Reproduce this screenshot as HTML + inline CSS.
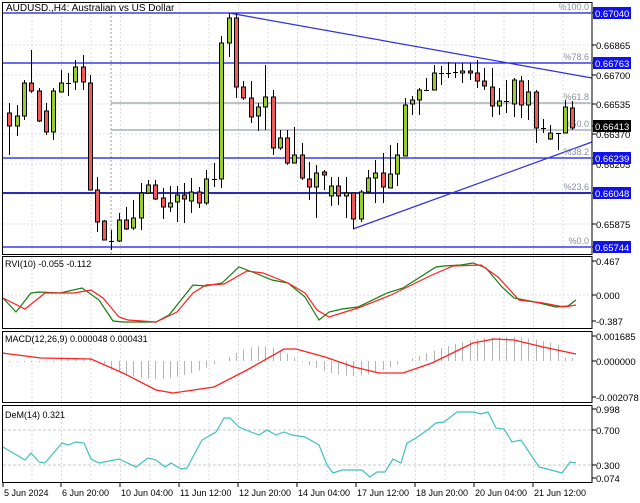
<!DOCTYPE html>
<html><head><meta charset="utf-8"><style>
html,body{margin:0;padding:0;background:#fff;width:640px;height:503px;overflow:hidden}
svg{display:block;font-family:"Liberation Sans",sans-serif}
</style></head><body>
<svg id="s" width="640" height="503" xmlns="http://www.w3.org/2000/svg"></svg>
<script>
var o=[];
function L(x1,y1,x2,y2,c,w,d){o.push('<line x1="'+x1+'" y1="'+y1+'" x2="'+x2+'" y2="'+y2+'" stroke="'+c+'" stroke-width="'+(w||1)+'"'+(d?' stroke-dasharray="'+d+'"':'')+'/>');}
function T(x,y,t,c,a,s){o.push('<text x="'+x+'" y="'+y+'" fill="'+(c||'#000')+'" font-size="'+(s||10)+'"'+(a?' text-anchor="'+a+'"':'')+'>'+t+'</text>');}
function P(pts,c,w){o.push('<polyline fill="none" stroke="'+c+'" stroke-width="'+(w||1)+'" points="'+pts.map(function(p){return p.join(',')}).join(' ')+'"/>');}
for(var gx=32;gx<590;gx+=29.5){L(gx,4,gx,254,'#dcdcdc',1,'2,2');L(gx,257,gx,328,'#dcdcdc',1,'2,2');L(gx,332,gx,402,'#dcdcdc',1,'2,2');L(gx,406,gx,482,'#dcdcdc',1,'2,2');}
[45,75,104,134,164,194,224].forEach(function(y){L(3,y,591,y,'#dcdcdc',1,'2,2')});
L(3,295,591,295,'#dcdcdc',1,'2,2');L(3,430,591,430,'#c8c8c8',1,'3,2');L(3,465,591,465,'#c8c8c8',1,'3,2');
L(111,4,111,254,'#999',1,'2,2');
L(111,103,591,103,'#a8b0b8',1.5);L(111,130,591,130,'#a8b0b8',1.5);
L(3,193,591,193,'#555',2);
[13,63,158,193,247].forEach(function(y){L(3,y,591,y,'#1414e6',1.2)});
L(229,13,592,78,'#3030e0',1.2);L(353,229,592,142,'#3030e0',1.2);
[['%100.0',10],['%78.6',60],['%61.8',100],['%50.0',127],['%38.2',155],['%23.6',190],['%0.0',244]].forEach(function(f){T(589,f[1],f[0],'#8890a0','end',9)});
var C=[[9,103,155,113,126],[17,105,136,126,116],[24,80,120,116,83],[31,50,93,83,91],[39,88,122,91,121],[46,103,135,111,132],[53,88,140,132,91],[61,70,92,92,83],[68,73,96,83,83],[75,60,90,82,67],[83,55,90,67,82],[90,75,190,83,190],[97,177,232,190,222],[104,220,240,221,240],[111,230,250,241,241],[119,213,242,241,220],[126,207,230,220,229],[133,200,230,228,218],[141,183,230,218,193],[148,180,194,193,185],
[155,180,200,185,199],[163,188,219,198,207],[170,186,212,207,203],[177,186,222,202,195],[184,183,223,195,199],[191,178,213,201,192],[199,187,208,192,203],[206,170,205,203,179],[214,163,187,179,179],[221,36,188,179,43],[229,13,57,43,18],[236,13,98,18,87],[243,81,100,87,98],[251,81,123,98,117],[258,103,131,116,107],[265,65,130,107,97],[273,90,155,97,148],[280,130,150,148,138],[287,130,165,138,163],[294,127,162,163,155],
[302,143,180,155,178],[309,162,200,179,187],[316,165,218,187,173],[324,170,190,172,175],[331,177,206,196,186],[338,177,205,186,196],[346,177,218,196,193],[353,193,229,193,219],[361,190,222,219,192],[368,170,193,192,178],[375,160,203,178,173],[383,153,203,173,187],[390,145,188,188,174],[397,143,186,174,155],[405,98,156,156,105],[412,96,115,104,100],[419,88,115,100,90],[426,78,90,90,90],[434,65,90,90,73],[441,66,85,73,73],[448,62,78,73,73],
[455,63,78,72,72],[462,63,83,73,71],[470,63,80,71,73],[477,60,88,73,81],[484,68,90,81,86],[492,68,117,87,106],[499,88,115,106,101],[506,80,113,101,101],[514,78,117,104,80],[521,76,118,81,105],[528,80,120,105,92],[536,90,143,92,128],[543,119,133,128,128],[550,125,140,139,133],[558,133,150,133,133],[565,100,133,133,107],[572,101,130,108,128]];
C.forEach(function(c){L(c[0]+.5,c[1],c[0]+.5,c[2],'#000',1);var t=Math.min(c[3],c[4]),b=Math.max(c[3],c[4]);if(b-t<1.5){L(c[0]-2,t+.5,c[0]+3,t+.5,'#000',1);}else{o.push('<rect x="'+(c[0]-1.5)+'" y="'+t+'" width="4" height="'+(b-t)+'" fill="'+(c[4]<c[3]?'#9acd32':'#f05a5a')+'" stroke="#000" stroke-width="1"/>');}});
C.forEach(function(c,i){var x=c[0],v;
if(x<90)v=(x>60?-3:1);else if(x<222)v=18*Math.sin((x-90)/132*Math.PI)+ (x<110?-3:0);else if(x<300)v=-15*Math.sin((x-222)/78*Math.PI);else if(x<405)v=15*Math.sin((x-300)/105*Math.PI);else v=-24*Math.sin((x-405)/200*Math.PI);
if(x>560)v=-3;L(x+.5,361,x+.5,361+v,'#b4b4b4',1);});
P([[2,353],[41,358],[91,359],[123,373],[156,390],[173,393],[214,387],[247,370],[284,349],[296,349],[325,357],[354,367],[379,373],[403,373],[432,363],[473,343],[494,339],[514,340],[543,347],[576,354]],'#ff2020',1.3);
P([[3,298],[16,312],[31,293],[39,292],[60,293],[82,288],[99,300],[113,321],[123,322],[156,322],[169,315],[181,300],[193,285],[206,286],[222,283],[239,267],[255,273],[272,280],[288,283],[305,297],[319,320],[329,312],[342,309],[358,307],[387,293],[403,288],[436,267],[444,266],[461,265],[473,263],[486,268],[502,287],[514,298],[535,302],[556,307],[568,306],[576,300]],'#108010',1.2);
P([[3,298],[25,309],[45,293],[74,293],[91,290],[103,298],[119,317],[128,320],[156,322],[177,312],[193,293],[206,285],[224,284],[247,271],[263,273],[288,283],[305,293],[317,310],[329,317],[358,308],[391,295],[432,275],[453,266],[481,265],[498,277],[519,300],[543,303],[564,307],[576,305]],'#ff2020',1.2);
P([[3,447],[25,460],[31,453],[39,462],[45,463],[62,443],[68,445],[76,442],[84,443],[91,459],[99,463],[119,459],[136,467],[148,458],[156,460],[165,467],[171,463],[181,469],[187,468],[202,440],[216,432],[224,418],[230,418],[239,427],[251,432],[259,435],[267,430],[276,435],[284,432],[292,435],[305,437],[319,445],[327,465],[333,473],[342,470],[362,470],[370,477],[377,472],[385,472],[393,459],[401,463],[407,443],[416,438],[426,431],[436,423],[444,422],[457,412],[473,412],[481,414],[488,412],[496,428],[504,429],[512,442],[521,440],[529,452],[539,467],[551,470],[562,473],[570,462],[576,463]],'#40c0c0',1.2);
o.push('<rect x="2.5" y="2.5" width="589.5" height="252" fill="none" stroke="#000"/>');
o.push('<rect x="2.5" y="256.5" width="589.5" height="72" fill="none" stroke="#000"/>');
o.push('<rect x="2.5" y="331.5" width="589.5" height="71" fill="none" stroke="#000"/>');
o.push('<rect x="2.5" y="405.5" width="589.5" height="77" fill="none" stroke="#000"/>');
T(6,11,'AUDUSD.,H4:  Australian vs US Dollar','#000',null,10);
T(5,267,'RVI(10) -0.055 -0.112','#000',null,9);
T(5,342,'MACD(12,26,9) 0.000048 0.000431','#000',null,9);
T(5,418,'DeM(14) 0.321','#000',null,9);
function AX(y,t,bg){L(592,y,596,y,'#000',1);if(bg){o.push('<rect x="593" y="'+(y-6)+'" width="38" height="12" fill="'+bg+'"/>');T(595,y+4,t,'#fff',null,9.5);}else T(596,y+4,t,'#000',null,9.5);}
AX(13,'0.67040','#1010f0');AX(45,'0.66865');AX(75,'0.66700');AX(63,'0.66763','#1010f0');AX(104,'0.66535');AX(134,'0.66370');AX(164,'0.66205');AX(126,'0.66413','#000');AX(158,'0.66239','#1010f0');AX(224,'0.65875');AX(193,'0.66048','#1010f0');AX(247,'0.65744','#1010f0');
AX(261,'0.467');AX(295,'0.000');AX(321,'-0.387');
AX(336,'0.001685');AX(361,'0.000000');AX(397,'-0.002078');
AX(409,'0.998');AX(430,'0.700');AX(465,'0.300');AX(478,'0.074');
[[2,'5 Jun 2024'],[60,'6 Jun 20:00'],[119,'10 Jun 04:00'],[178,'11 Jun 12:00'],[237,'12 Jun 20:00'],[296,'14 Jun 04:00'],[355,'17 Jun 12:00'],[414,'18 Jun 20:00'],[473,'20 Jun 04:00'],[532,'21 Jun 12:00']].forEach(function(d){L(d[0]+1,483,d[0]+1,487,'#000',1);T(d[0]+2,496,d[1],'#000',null,9);});
document.getElementById('s').innerHTML=o.join('');
</script>
</body></html>
